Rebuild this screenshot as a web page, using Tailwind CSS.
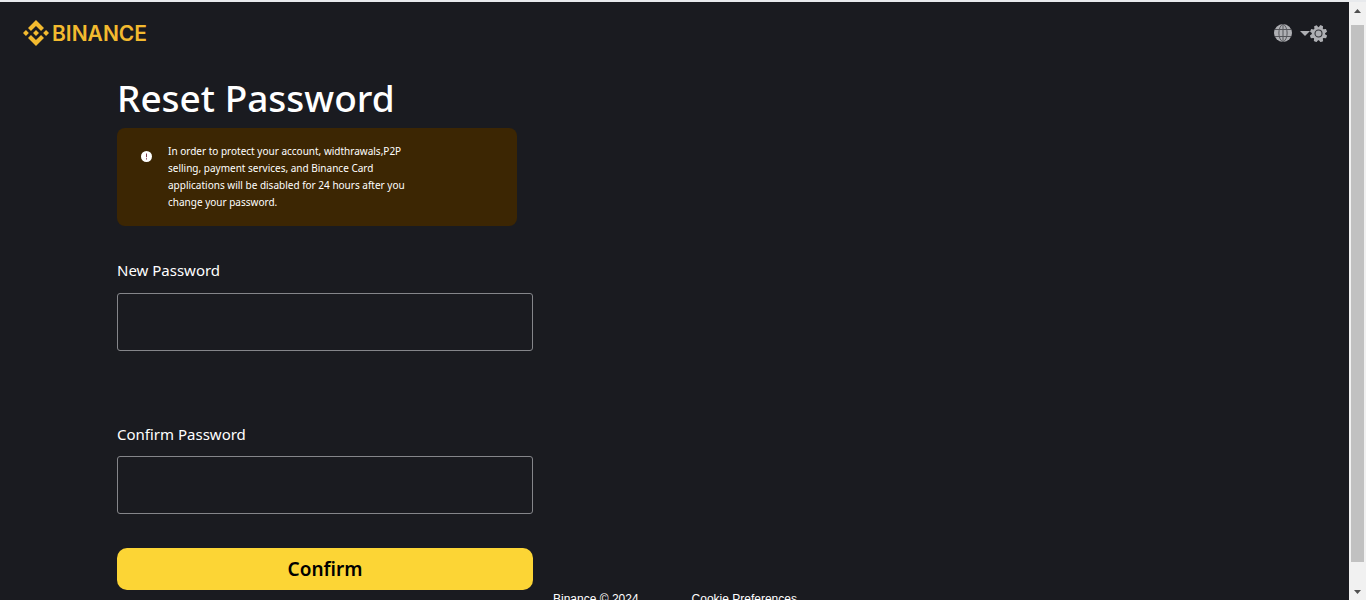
<!DOCTYPE html>
<html lang="en">
<head>
<meta charset="utf-8">
<meta name="viewport" content="width=device-width, initial-scale=1">
<title>Reset Password</title>
<script src="https://cdn.jsdelivr.net/npm/@tailwindcss/browser@4"></script>
</head>
<body class="flex h-screen overflow-hidden border-t-2 border-[#e8eaed] bg-[#1a1b20] font-['Noto_Sans','Open_Sans',sans-serif] text-white">
  <div class="min-w-0 flex-1">
    <header class="flex h-[62px] items-center justify-between pl-[23px] pr-[22px]">
      <a href="#" class="flex items-center gap-[3px] font-['Inter',sans-serif] text-[21px] leading-none font-semibold text-[#f3ba2f]">
        <svg class="size-[26px]" viewBox="0 0 126.61 126.61" fill="currentColor" aria-hidden="true">
          <path d="M38.73 53.2 63.3 28.62 87.89 53.21 102.19 38.91 63.3 0 24.43 38.9zM0 63.31 14.3 49 28.6 63.31 14.3 77.61zM38.73 73.41 63.3 98 87.89 73.4 102.2 87.69 63.3 126.61 24.42 87.72zM98 63.31 112.3 49 126.61 63.31 112.3 77.61zM77.83 63.3 63.3 48.78 48.78 63.31 63.3 77.82z"/>
        </svg>
        <span>BINANCE</span>
      </a>
      <div class="flex items-center text-[#aeafb3]">
        <button type="button" class="flex items-center gap-2" aria-label="Language">
          <svg class="size-[18px]" viewBox="0 0 18 18" aria-hidden="true">
            <circle cx="9" cy="9" r="9" fill="currentColor"/>
            <path d="M9 0v18M1 5.5h16M1 12.5h16M9 0C3.5 3 3.5 15 9 18M9 0c5.5 3 5.5 15 0 18" fill="none" stroke="#55565b" stroke-width="1"/>
          </svg>
          <svg class="h-[5px] w-[10px]" viewBox="0 0 10 5" fill="currentColor" aria-hidden="true"><path d="M0 0h10L5 5z"/></svg>
        </button>
        <button type="button" aria-label="Theme">
          <svg class="size-[17px]" viewBox="0 0 18 18" fill="none" aria-hidden="true">
            <path transform="rotate(22.5 9 9)" fill="currentColor" d="M6.7 2.6 7.5 0h3l.8 2.6.8.3 2.4-1.3 2.1 2.1-1.3 2.4.4.9 2.6.6v3l-2.6.7-.4.9 1.3 2.4-2.1 2.1-2.4-1.3-.8.3-.8 2.6h-3l-.8-2.6-.8-.3-2.4 1.3-2.1-2.1 1.3-2.4-.4-.9L0 10.6v-3L2.7 7l.4-.9-1.3-2.4 2.1-2.1 2.4 1.3z"/>
            <circle cx="9" cy="9" r="3.7" stroke="#34353a" stroke-width="1.2"/>
          </svg>
        </button>
      </div>
    </header>

    <main class="ml-[117px] flex w-[416px] max-w-full flex-col">
      <h1 class="h-16 pt-2 text-[37px] leading-[52px] font-medium whitespace-nowrap">Reset Password</h1>
      <section class="flex w-[400px] gap-4 rounded-lg bg-[#3c2603] py-[15px] pl-6">
        <svg class="mt-2 size-[11px] shrink-0" viewBox="0 0 11 11" aria-hidden="true">
          <circle cx="5.5" cy="5.5" r="5.5" fill="#fff"/>
          <path d="M5.5 2.5v3.7M5.5 7.2v1.3" stroke="#80404f" stroke-width="1"/>
        </svg>
        <p class="text-[10px] leading-[17px] whitespace-nowrap">In order to protect your account, widthrawals,P2P<br>selling, payment services, and Binance Card<br>applications will be disabled for 24 hours after you<br>change your password.</p>
      </section>
      <form class="flex flex-col pt-8">
        <label for="new-password" class="text-[15px] leading-6">New Password</label>
        <input id="new-password" type="password" class="mt-[11px] h-[58px] rounded-[3px] border border-[#85868a] bg-transparent px-3">
        <label for="confirm-password" class="mt-[71px] text-[15px] leading-6">Confirm Password</label>
        <input id="confirm-password" type="password" class="mt-[10px] h-[58px] rounded-[3px] border border-[#85868a] bg-transparent px-3">
        <button type="submit" class="mt-[34px] h-[42px] rounded-[10px] bg-[#fcd535] text-[19px] leading-7 font-semibold text-black">Confirm</button>
      </form>
    </main>
    <footer class="ml-[553px] flex gap-[53px] font-['Liberation_Sans',sans-serif] text-[12px] leading-[18px]">
      <span>Binance © 2024</span>
      <a href="#">Cookie Preferences</a>
    </footer>
  </div>

  <div class="flex w-[17px] shrink-0 flex-col items-center bg-[#f1f1f1]" aria-hidden="true">
    <div class="flex h-[23px] items-start pt-[7px]"><svg class="h-1 w-[7px]" viewBox="0 0 7 4" fill="#505050"><path d="M0 4 3.5 0 7 4z"/></svg></div>
    <div class="w-[13px] flex-1 bg-[#c1c1c1]"></div>
    <div class="flex h-[38px] items-end pb-[6px]"><svg class="h-1 w-[7px]" viewBox="0 0 7 4" fill="#505050"><path d="M0 0h7L3.5 4z"/></svg></div>
  </div>
</body>
</html>
